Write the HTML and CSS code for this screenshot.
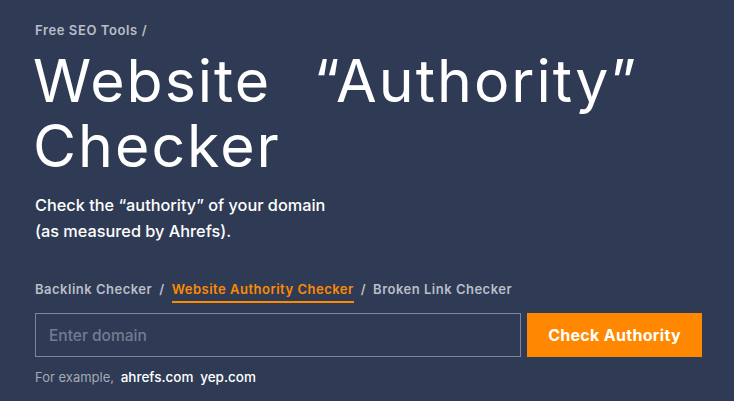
FILE: index.html
```
<!DOCTYPE html>
<html lang="en">
<head>
<meta charset="utf-8">
<title>Website Authority Checker</title>
<link rel="stylesheet" href="styles.css">
</head>
<body>
<main class="hero">
  <div class="crumbs">Free SEO Tools /</div>
  <h1 class="title">Website “Authority”<br>Checker</h1>
  <p class="lead">Check the “authority” of your domain<br>(as measured by Ahrefs).</p>
  <nav class="tabs">
    <a class="tab" href="#">Backlink Checker</a>
    <span class="sep">/</span>
    <a class="tab active" href="#">Website Authority Checker</a>
    <span class="sep">/</span>
    <a class="tab" href="#">Broken Link Checker</a>
  </nav>
  <form class="search">
    <input class="field" type="text" placeholder="Enter domain">
    <button class="btn" type="button">Check Authority</button>
  </form>
  <div class="examples">For example, <span class="ex">ahrefs.com</span> <span class="ex">yep.com</span></div>
</main>
</body>
</html>
```
FILE: styles.css
```
html, body {
  margin: 0;
  padding: 0;
}
body {
  background: #2f3b55;
  width: 734px;
  height: 401px;
  overflow: hidden;
  font-family: Inter, "Liberation Sans", sans-serif;
  color: #fff;
}
.hero {
  padding: 22px 0 0 35px;
  display: flex;
  flex-direction: column;
  align-items: flex-start;
}
.crumbs {
  font-size: 13px;
  font-weight: 600;
  color: #b9bec8;
  line-height: 16px;
  letter-spacing: 0.6px;
}
.title {
  margin: 10px 0 0 -2px;
  font-size: 59px;
  font-weight: 400;
  line-height: 65px;
  letter-spacing: 2px;
  word-spacing: 24px;
}
.lead {
  margin: 14px 0 0 0;
  font-size: 16.3px;
  font-weight: 500;
  line-height: 26px;
  color: #fff;
}
.tabs {
  margin-top: 37px;
  display: flex;
  gap: 7px;
  font-size: 13px;
  font-weight: 600;
  line-height: 16px;
  letter-spacing: 0.5px;
}
.tab {
  color: #b9bec8;
  text-decoration: none;
}
.tab.active {
  color: #ff8a00;
  border-bottom: 2px solid #ff8a00;
  padding-bottom: 4px;
}
.sep {
  color: #b9bec8;
}
.search {
  margin-top: 10px;
  display: flex;
  gap: 6px;
}
.field {
  width: 486px;
  height: 44px;
  box-sizing: border-box;
  margin: 0;
  background: transparent;
  border: 1px solid #7d8597;
  padding: 0 13px;
  font-family: inherit;
  font-size: 15.5px;
  font-weight: 500;
  color: #fff;
  outline: none;
}
.field::placeholder {
  color: #737c8e;
}
.btn {
  width: 175px;
  height: 44px;
  margin: 0;
  border: 0;
  background: #ff8800;
  color: #fff;
  font-family: inherit;
  font-size: 16px;
  font-weight: 700;
  letter-spacing: 0.3px;
}
.examples {
  margin-top: 12px;
  font-size: 13px;
  color: #a3a9b5;
  line-height: 16px;
}
.ex {
  color: #fff;
  font-weight: 500;
  margin-left: 3px;
  font-size: 13.5px;
}
```
